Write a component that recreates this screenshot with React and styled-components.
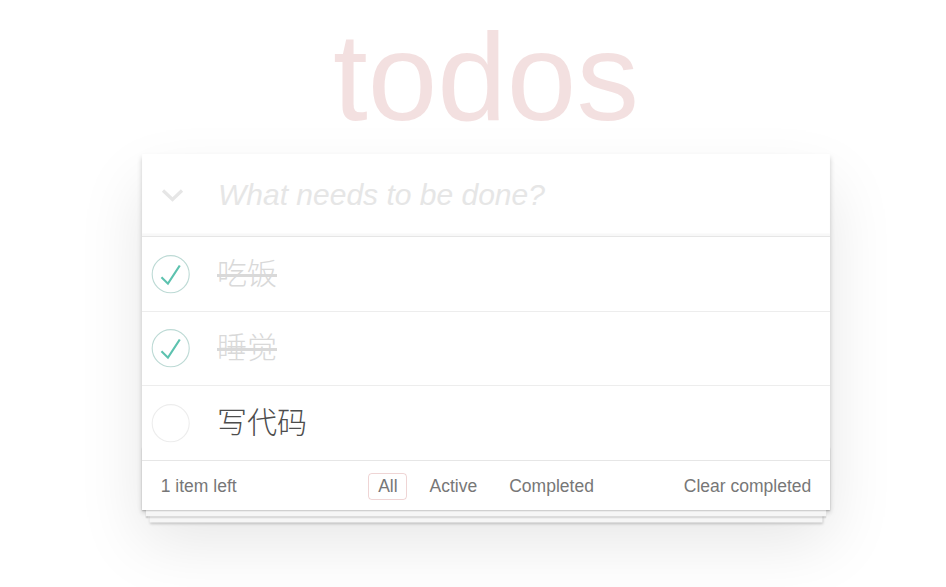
import React from 'react';
import styled, { createGlobalStyle } from 'styled-components';

const GlobalStyle = createGlobalStyle`
  html, body {
    margin: 0;
    padding: 0;
    background: #fff;
  }
  body {
    min-height: 100vh;
    font-family: "Liberation Sans", "Noto Sans CJK SC", sans-serif;
    font-weight: 300;
    color: #4d4d4d;
    -webkit-font-smoothing: antialiased;
  }
`;

// Bloque principal, a 1.25x del TodoMVC original
const Page = styled.div`
  width: 688px;
  margin: 0 0 0 142px;
  padding-bottom: 76px;
`;

const Title = styled.h1`
  margin: 0;
  height: 154px;
  font-size: 125px;
  line-height: 154px;
  font-weight: 100;
  text-align: center;
  color: rgba(175, 47, 47, 0.15);
  text-rendering: optimizeLegibility;
`;

const App = styled.section`
  background: #fff;
  position: relative;
  box-shadow: 0 2.5px 5px 0 rgba(0, 0, 0, 0.2), 0 31px 62px 0 rgba(0, 0, 0, 0.1);
`;

const Header = styled.header`
  display: flex;
  align-items: center;
  height: 82px;
  box-shadow: inset 0 -2.5px 1.25px rgba(0, 0, 0, 0.03);
`;

const ToggleAll = styled.div`
  width: 76px;
  padding-left: 19px;
  box-sizing: border-box;
  display: flex;
  align-items: center;
`;

const NewTodo = styled.input`
  flex: 1;
  border: none;
  outline: none;
  background: transparent;
  padding: 20px 20px 20px 0;
  font-family: inherit;
  font-size: 30px;
  font-weight: 300;
  line-height: 42px;
  color: #4d4d4d;

  &::placeholder {
    font-style: italic;
    font-weight: 300;
    color: #e6e6e6;
  }
`;

const Main = styled.section`
  border-top: 1.25px solid #e6e6e6;
  position: relative;
  z-index: 2;
`;

const List = styled.ul`
  margin: 0;
  padding: 0;
  list-style: none;
`;

const Item = styled.li`
  display: flex;
  align-items: center;
  padding-right: 18.75px;
  border-bottom: 1.25px solid #ededed;

  &:last-child {
    border-bottom: none;
  }
`;

const CheckBox = styled.svg`
  flex: none;
  display: block;
`;

const ItemLabel = styled.label`
  margin-left: 25px;
  padding: 18.75px 0;
  font-size: 30px;
  line-height: 36px;
  font-weight: 300;
  word-break: break-all;
  color: ${({ done }) => (done ? '#d9d9d9' : '#4d4d4d')};
  text-decoration: ${({ done }) => (done ? 'line-through' : 'none')};
`;

const Footer = styled.footer`
  position: relative;
  display: grid;
  grid-template-columns: 1fr auto 1fr;
  align-items: center;
  height: 50px;
  box-sizing: border-box;
  padding: 2px 18.75px 0;
  border-top: 1.25px solid #e6e6e6;
  color: #777;
  font-size: 17.5px;

  &:before {
    content: '';
    position: absolute;
    right: 0;
    bottom: 0;
    left: 0;
    height: 62.5px;
    overflow: hidden;
    box-shadow: 0 1.25px 1.25px rgba(0, 0, 0, 0.2),
      0 10px 0 -3.75px #f6f6f6,
      0 11.25px 1.25px -3.75px rgba(0, 0, 0, 0.2),
      0 20px 0 -7.5px #f6f6f6,
      0 21.25px 2.5px -7.5px rgba(0, 0, 0, 0.2);
  }
`;

const Count = styled.span`
  position: relative;
  justify-self: start;
`;

const Filters = styled.ul`
  position: relative;
  display: flex;
  gap: 5px;
  margin: 0;
  padding: 0;
  list-style: none;
`;

const FilterLink = styled.a`
  display: block;
  margin: 3.75px;
  padding: 2.5px 8.75px;
  line-height: 20px;
  color: inherit;
  text-decoration: none;
  border: 1.25px solid ${({ selected }) => (selected ? 'rgba(175, 47, 47, 0.2)' : 'transparent')};
  border-radius: 3.75px;
  cursor: pointer;
`;

const ClearButton = styled.button`
  position: relative;
  justify-self: end;
  margin: 0;
  padding: 0;
  border: none;
  background: none;
  font-family: inherit;
  font-size: 17.5px;
  font-weight: 300;
  color: #777;
  cursor: pointer;
`;

const todos = [
  { id: 1, title: '吃饭', done: true },
  { id: 2, title: '睡觉', done: true },
  { id: 3, title: '写代码', done: false },
];

const Check = ({ done }) => (
  <CheckBox viewBox="-10 -18 100 135" width="50" height="50">
    <circle cx="50" cy="50" r="50" fill="none" stroke={done ? '#bddad5' : '#ededed'} strokeWidth="3" />
    {done && <path fill="#5dc2af" d="M72 25L42 71 27 56l-4 4 20 20 34-52z" />}
  </CheckBox>
);

export default function TodoApp() {
  const left = todos.filter((t) => !t.done).length;

  return (
    <>
      <GlobalStyle />
      <Page>
        <Title>todos</Title>
        <App>
          <Header>
            <ToggleAll>
              <svg width="23" height="14" viewBox="0 0 23 14">
                <path d="M2 2.5 L11.5 11.5 L21 2.5" fill="none" stroke="#e6e6e6" strokeWidth="3.2" strokeLinejoin="miter" />
              </svg>
            </ToggleAll>
            <NewTodo placeholder="What needs to be done?" />
          </Header>
          <Main>
            <List>
              {todos.map((t) => (
                <Item key={t.id}>
                  <Check done={t.done} />
                  <ItemLabel done={t.done}>{t.title}</ItemLabel>
                </Item>
              ))}
            </List>
          </Main>
          <Footer>
            <Count>{left} item left</Count>
            <Filters>
              <li><FilterLink selected>All</FilterLink></li>
              <li><FilterLink>Active</FilterLink></li>
              <li><FilterLink>Completed</FilterLink></li>
            </Filters>
            <ClearButton>Clear completed</ClearButton>
          </Footer>
        </App>
      </Page>
    </>
  );
}
